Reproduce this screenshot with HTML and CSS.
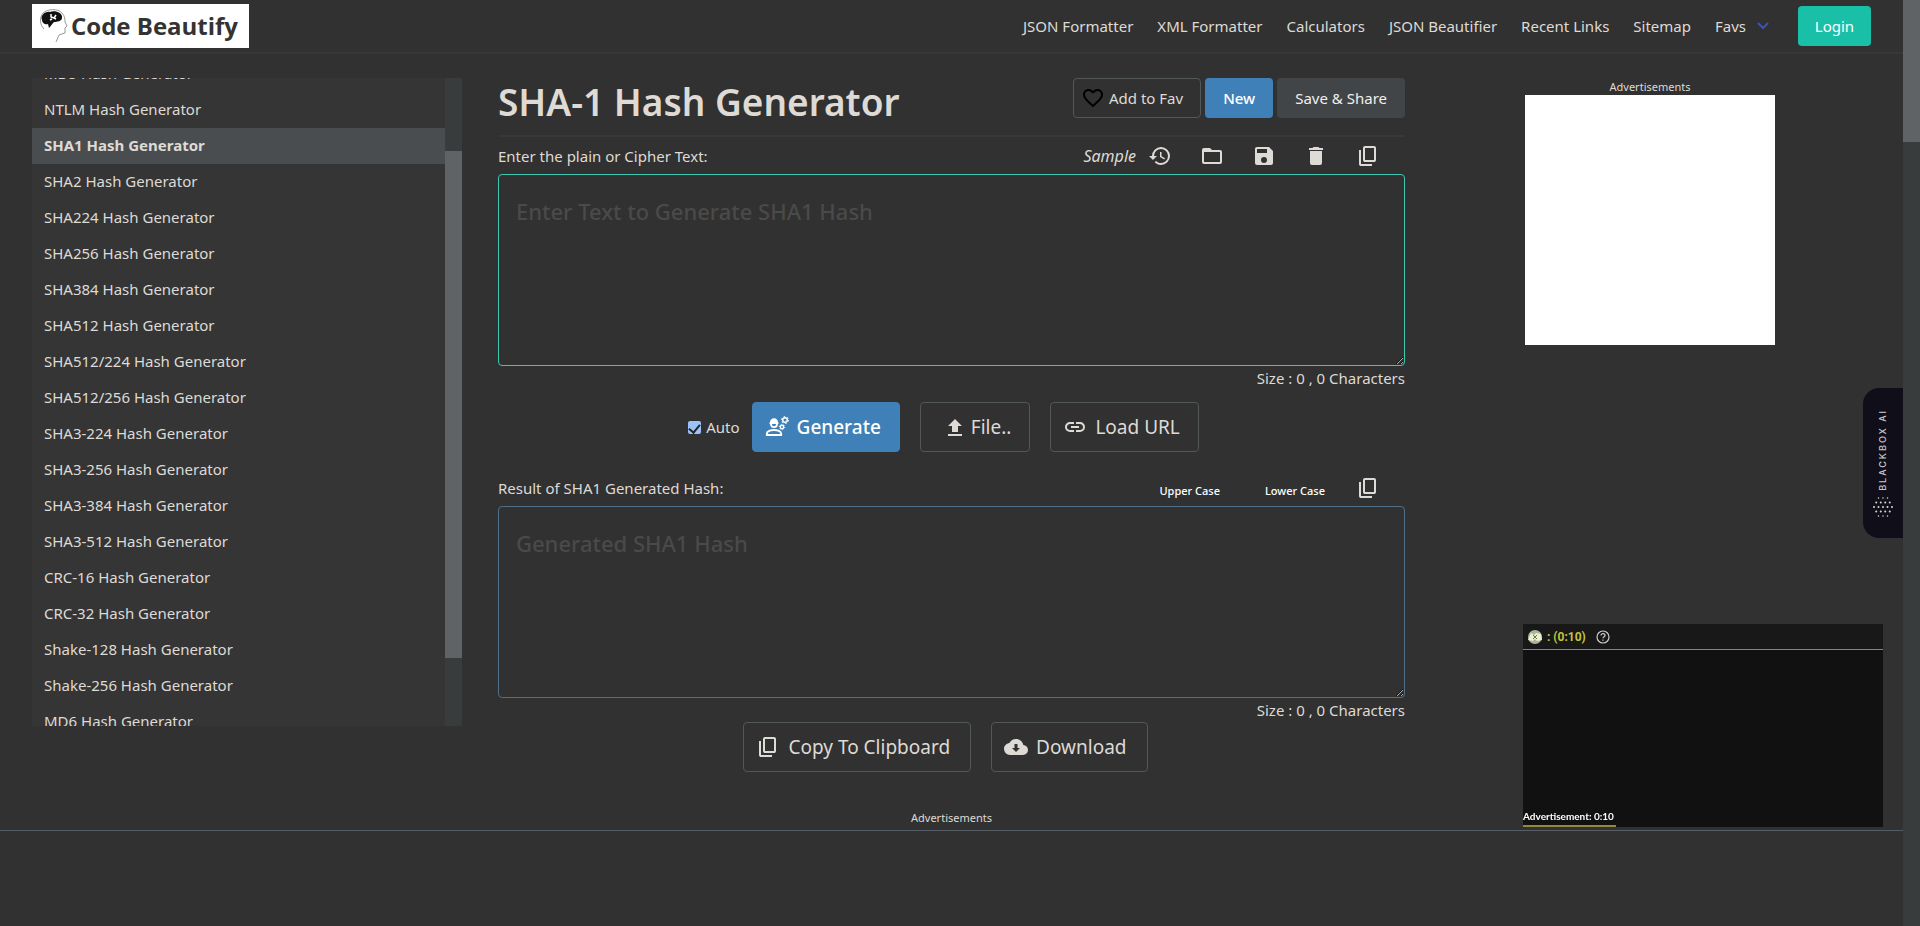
FILE: index.html
```
<!DOCTYPE html>
<html lang="en">
<head>
<meta charset="utf-8">
<title>SHA-1 Hash Generator</title>
<link rel="stylesheet" href="styles.css">
</head>
<body>
<svg class="sprite" aria-hidden="true">
  <symbol id="i-copy" viewBox="0 -960 960 960"><path d="M360-240q-33 0-56.500-23.500T280-320v-480q0-33 23.500-56.500T360-880h360q33 0 56.500 23.500T800-800v480q0 33-23.500 56.500T720-240H360Zm0-80h360v-480H360v480ZM200-80q-33 0-56.500-23.500T120-160v-560h80v560h440v80H200Z"/></symbol>
</svg>
<div class="shell">
  <div class="page">
    <header class="header">
      <a class="logo" href="#">
        <svg class="logo-mark" viewBox="0 0 30 36" aria-hidden="true">
          <path d="M5 21C1 17 0 10 4 5C8 1 19 0 23 5C26 8 26 12 26 14L28 18L26 20L26 25L20 27L17 34" fill="none" stroke="#999" stroke-width="1"/>
          <path d="M3 12C1 8 6 3 11 4C16 2 24 5 23 10C23 13 18 14 15 14C13 16 12 18 10 20L9 16C6 17 3 15 3 12Z" fill="#111"/>
          <path d="M12 6V9L15 10M11 12L13 11M17 7L15 10L17 11" fill="none" stroke="#fff" stroke-width="1.500"/>
        </svg>
        <span>Code Beautify</span>
      </a>
      <nav class="nav">
        <a href="#">JSON Formatter</a>
        <a href="#">XML Formatter</a>
        <a href="#">Calculators</a>
        <a href="#">JSON Beautifier</a>
        <a href="#">Recent Links</a>
        <a href="#">Sitemap</a>
        <a class="favs" href="#">Favs
          <svg viewBox="0 0 14 10" class="chevron" aria-hidden="true"><path d="M2 2L7 7L12 2" fill="none" stroke="#3f51b5" stroke-width="2"/></svg>
        </a>
        <button class="login" type="button">Login</button>
      </nav>
    </header>

    <div class="content">
      <aside class="sidebar">
        <div class="menu">
          <a href="#">MD5 Hash Generator</a>
          <a href="#">NTLM Hash Generator</a>
          <a class="active" href="#">SHA1 Hash Generator</a>
          <a href="#">SHA2 Hash Generator</a>
          <a href="#">SHA224 Hash Generator</a>
          <a href="#">SHA256 Hash Generator</a>
          <a href="#">SHA384 Hash Generator</a>
          <a href="#">SHA512 Hash Generator</a>
          <a href="#">SHA512/224 Hash Generator</a>
          <a href="#">SHA512/256 Hash Generator</a>
          <a href="#">SHA3-224 Hash Generator</a>
          <a href="#">SHA3-256 Hash Generator</a>
          <a href="#">SHA3-384 Hash Generator</a>
          <a href="#">SHA3-512 Hash Generator</a>
          <a href="#">CRC-16 Hash Generator</a>
          <a href="#">CRC-32 Hash Generator</a>
          <a href="#">Shake-128 Hash Generator</a>
          <a href="#">Shake-256 Hash Generator</a>
          <a href="#">MD6 Hash Generator</a>
        </div>
        <div class="track menu-track"><div class="thumb"></div></div>
      </aside>

      <main class="main">
        <div class="title-row">
          <h1>SHA-1 Hash Generator</h1>
          <div class="title-actions">
            <button class="btn-sm outline" type="button">
              <svg class="icon heart" viewBox="0 0 24 24" aria-hidden="true"><path d="M12.100,18.550L12,18.650L11.890,18.550C7.140,14.240 4,11.390 4,8.500C4,6.500 5.500,5 7.500,5C9.040,5 10.540,6 11.070,7.360H12.930C13.460,6 14.960,5 16.500,5C18.500,5 20,6.500 20,8.500C20,11.390 16.860,14.240 12.100,18.550M16.500,3C14.760,3 13.090,3.810 12,5.080C10.910,3.810 9.240,3 7.500,3C4.420,3 2,5.410 2,8.500C2,12.270 5.400,15.360 10.550,20.030L12,21.350L13.450,20.030C18.600,15.360 22,12.270 22,8.500C22,5.410 19.580,3 16.500,3Z"/></svg>
              Add to Fav</button>
            <button class="btn-sm primary" type="button">New</button>
            <button class="btn-sm solid" type="button">Save &amp; Share</button>
          </div>
        </div>
        <hr class="divider">

        <div class="bar">
          <label for="plain">Enter the plain or Cipher Text:</label>
          <div class="tools">
            <button class="tool sample" type="button"><i>Sample</i>
              <svg class="icon" viewBox="0 0 24 24" aria-hidden="true"><path d="M13.500,8H12V13L16.280,15.540L17,14.330L13.500,12.250V8M13,3A9,9 0 0,0 4,12H1L4.960,16.030L9,12H6A7,7 0 0,1 13,5A7,7 0 0,1 20,12A7,7 0 0,1 13,19C11.070,19 9.320,18.210 8.060,16.940L6.640,18.360C8.270,20 10.500,21 13,21A9,9 0 0,0 22,12A9,9 0 0,0 13,3"/></svg></button>
            <button class="tool" type="button" aria-label="Open"><svg class="icon" viewBox="0 0 24 24"><path d="M20,18H4V8H20M20,6H12L10,4H4C2.890,4 2,4.890 2,6V18A2,2 0 0,0 4,20H20A2,2 0 0,0 22,18V8C22,6.890 21.100,6 20,6Z"/></svg></button>
            <button class="tool" type="button" aria-label="Save"><svg class="icon" viewBox="0 0 24 24"><path d="M15,9H5V5H15M12,19A3,3 0 0,1 9,16A3,3 0 0,1 12,13A3,3 0 0,1 15,16A3,3 0 0,1 12,19M17,3H5C3.890,3 3,3.900 3,5V19A2,2 0 0,0 5,21H19A2,2 0 0,0 21,19V7L17,3Z"/></svg></button>
            <button class="tool" type="button" aria-label="Delete"><svg class="icon" viewBox="0 0 24 24"><path d="M19,4H15.500L14.500,3H9.500L8.500,4H5V6H19M6,19A2,2 0 0,0 8,21H16A2,2 0 0,0 18,19V7H6V19Z"/></svg></button>
            <button class="tool" type="button" aria-label="Copy"><svg class="icon"><use href="#i-copy"/></svg></button>
          </div>
        </div>
        <textarea class="box box-input" id="plain" placeholder="Enter Text to Generate SHA1 Hash"></textarea>
        <div class="size">Size : 0 , 0 Characters</div>

        <div class="actions">
          <label class="auto"><input type="checkbox" checked>Auto</label>
          <button class="btn primary" type="button">
            <svg class="icon" viewBox="0 0 24 24" aria-hidden="true"><path d="M1.900 20.100V18.500C1.900 16 6 15 9 15S16.100 16 16.100 18.500V20.100Z" fill="none" stroke="currentColor" stroke-width="2"/><path d="M4.500 7.500H5C5 5 6.700 3.300 9 3.300S13 5 13 7.500H13.500V9H4.500Z"/><path d="M6 9C6 13.200 12 13.200 12 9" fill="none" stroke="currentColor" stroke-width="1.800"/><circle cx="20" cy="5" r="2.300" fill="none" stroke="currentColor" stroke-width="1.500"/><circle cx="20" cy="5" r="3.500" fill="none" stroke="currentColor" stroke-width="1" stroke-dasharray="1.600 2.060"/><circle cx="17" cy="12" r="1.700" fill="none" stroke="currentColor" stroke-width="1.400"/><circle cx="17" cy="12" r="2.700" fill="none" stroke="currentColor" stroke-width="1" stroke-dasharray="1.200 1.620"/></svg>
            Generate</button>
          <button class="btn outline file" type="button">
            <svg class="icon-sm" viewBox="4 2 16 19" aria-hidden="true"><path d="M9,16V10H5L12,3L19,10H15V16H9M5,20V18H19V20H5Z"/></svg>
            File..</button>
          <button class="btn outline" type="button">
            <svg class="icon" viewBox="0 0 24 24" aria-hidden="true"><path d="M3.900,12C3.900,10.290 5.290,8.900 7,8.900H11V7H7A5,5 0 0,0 2,12A5,5 0 0,0 7,17H11V15.100H7C5.290,15.100 3.900,13.710 3.900,12M8,13H16V11H8V13M17,7H13V8.900H17C18.710,8.900 20.100,10.290 20.100,12C20.100,13.710 18.710,15.100 17,15.100H13V17H17A5,5 0 0,0 22,12A5,5 0 0,0 17,7Z"/></svg>
            Load URL</button>
        </div>

        <div class="bar">
          <label for="result">Result of SHA1 Generated Hash:</label>
          <div class="tools cases">
            <button class="case" type="button">Upper Case</button>
            <button class="case" type="button">Lower Case</button>
            <button class="tool" type="button" aria-label="Copy result"><svg class="icon"><use href="#i-copy"/></svg></button>
          </div>
        </div>
        <textarea class="box box-result" id="result" placeholder="Generated SHA1 Hash"></textarea>
        <div class="size">Size : 0 , 0 Characters</div>

        <div class="exports">
          <button class="btn outline" type="button"><svg class="icon"><use href="#i-copy"/></svg>Copy To Clipboard</button>
          <button class="btn outline" type="button"><svg class="icon" viewBox="0 0 24 24" aria-hidden="true"><path fill-rule="evenodd" d="M19.350,10.030C18.670,6.590 15.640,4 12,4C9.110,4 6.600,5.640 5.350,8.030C2.340,8.360 0,10.900 0,14A6,6 0 0,0 6,20H19A5,5 0 0,0 24,15C24,12.360 21.950,10.220 19.350,10.030ZM12 17L8 13H10.500V9H13.500V13H16Z"/></svg>Download</button>
        </div>
        <div class="ad-label">Advertisements</div>
      </main>

      <aside class="ads">
        <div class="ad-label">Advertisements</div>
        <div class="ad-box"></div>
      </aside>
    </div>

    <footer class="ad-bar"></footer>
  </div>
  <div class="track page-track"><div class="thumb"></div></div>
</div>

<section class="video">
  <div class="video-head">
    <svg class="coin" viewBox="0 0 16 16" aria-hidden="true"><circle cx="8" cy="8" r="7" fill="#aab49a"/><path d="M1 11L4 4L7 6L9 4L14 5L15 11L10 12L8 10L6 12Z" fill="#e8f0cc"/><path d="M6 6L10 10M10 6L6 10" stroke="#68705a" stroke-width="1"/></svg>
    <span>: (0:10)</span>
    <svg class="help" viewBox="0 0 14 14" aria-hidden="true"><circle cx="7" cy="7" r="6" fill="none" stroke="#ccc" stroke-width="1.200"/><path d="M5 5.500C5 3 9 3 9 5.500C9 6.800 7 6.800 7 8.300M7 9.500V10.800" fill="none" stroke="#ccc" stroke-width="1.200"/></svg>
  </div>
  <div class="video-body"><span>Advertisement: 0:10</span></div>
</section>

<button class="blackbox" type="button">
  <svg viewBox="0 0 20 20" class="dots" aria-hidden="true">
    <g fill="none" stroke="#d8d8de" stroke-linecap="round" stroke-dasharray="0 4.500">
      <path stroke-width="1.500" d="M5.500 1H15M5.500 19H15"/>
      <path stroke-width="2" d="M3.250 5.500H17M3.250 14.500H17"/>
      <path stroke-width="2" d="M1 10H19.500"/>
    </g>
  </svg>
  <span>BLACKBOX AI</span>
</button>
</body>
</html>
```
FILE: styles.css
```
* { box-sizing: border-box; }

body {
  margin: 0;
  background: #313131;
  color: #dedad5;
  font-family: "Noto Sans", "Open Sans", sans-serif;
  font-size: 15px;
  line-height: 24px;
}

a { color: inherit; text-decoration: none; }

button {
  font: inherit;
  color: inherit;
  background: none;
  border: 0;
  padding: 0;
  cursor: pointer;
}

.sprite { display: none; }
.icon { width: 24px; height: 24px; fill: currentColor; flex: none; }
.icon-sm { width: 16px; height: 19px; fill: currentColor; flex: none; }

.shell { display: flex; height: 100vh; overflow: hidden; }
.page { flex: 1; display: flex; flex-direction: column; min-width: 0; }

.track { width: 17px; flex: none; background: #393c3c; }
.thumb { background: #5f6366; }
.page-track .thumb { height: 142px; }

/* header */
.header {
  display: flex;
  align-items: center;
  justify-content: space-between;
  height: 54px;
  padding: 0 32px;
  border-bottom: 2px solid #373737;
}

.logo {
  display: flex;
  align-items: center;
  gap: 2px;
  height: 44px;
  padding: 0 11px 0 7px;
  background: #fff;
  color: #333;
  font-family: "Open Sans", sans-serif;
  font-size: 24px;
  font-weight: 700;
  white-space: nowrap;
}
.logo-mark { width: 30px; height: 36px; }

.nav { display: flex; align-items: center; gap: 24px; white-space: nowrap; }
.favs { display: flex; align-items: center; gap: 10px; margin-right: 4px; }
.chevron { width: 14px; height: 10px; }
.login {
  width: 73px;
  height: 40px;
  border-radius: 4px;
  background: #19bfa7;
  color: #fff;
}

/* columns */
.content {
  display: grid;
  grid-template-columns: 430fr 907fr 418fr;
  gap: 36px;
  align-items: start;
  padding: 24px 44px 0 32px;
}

.sidebar { display: flex; height: 648px; background: #353535; }
.menu {
  flex: 1;
  display: flex;
  flex-direction: column;
  overflow: hidden;
}
.menu a { flex: none; height: 36px; padding: 0 12px; line-height: 35px; }
.menu a:first-child { margin-top: -22px; }
.menu .active { background: #4a4d4f; font-weight: 700; }
.menu-track { padding-top: 73px; }
.menu-track .thumb { height: 507px; }

.title-row { display: flex; justify-content: space-between; align-items: flex-start; height: 50px; }
h1 { margin: 0; font-size: 37px; line-height: 48px; font-weight: 600; white-space: nowrap; }
.title-actions { display: flex; gap: 4px; }
.btn-sm {
  display: flex;
  align-items: center;
  gap: 4px;
  height: 40px;
  padding: 0 17px;
  border: 1px solid transparent;
  border-radius: 4px;
  white-space: nowrap;
}
.btn-sm.outline { padding-left: 7px; }
.outline { border-color: #52575a; }
.primary { background: #3f80b8; color: #fff; font-weight: 500; }
.solid { background: #414548; color: #f2f0ed; }
.heart { fill: #000; }

.divider { height: 2px; margin: 7px 0 3px; border: 0; background: #383838; }

.bar {
  display: flex;
  justify-content: space-between;
  align-items: center;
  height: 34px;
  padding-bottom: 2px;
}
.tools { display: flex; align-items: center; gap: 28px; padding-right: 25px; }
.tool { display: flex; align-items: center; }
.sample { gap: 12px; font-size: 16px; }
.cases { gap: 31px; }
.case { padding: 6px 0 0 14px; font-size: 11px; line-height: 18px; font-weight: 500; color: #fff; }

.box {
  display: block;
  width: 100%;
  height: 192px;
  padding: 18px 17px;
  border: 1px solid #3cc8b0;
  border-radius: 4px;
  background: transparent;
  color: #dedad5;
  font: 500 22px/36px "Noto Sans", "Open Sans", sans-serif;
  outline: 0;
  color-scheme: dark;
}
.box-result { border-color: #4e6f88; }
.box::placeholder { color: #4a4a4a; }
.size { text-align: right; }

.actions, .exports { display: flex; justify-content: center; gap: 20px; padding-right: 12px; }
.actions { padding: 12px 16px 20px 0; }
.auto { display: flex; align-items: center; gap: 5px; margin-right: -8px; }
.auto input {
  appearance: none;
  width: 13px;
  height: 13px;
  margin: 0;
  border-radius: 2px;
  background: #9cc3f8;
  display: grid;
  place-items: center;
}
.auto input:checked::before {
  content: "";
  width: 9px;
  height: 5px;
  border: solid #222;
  border-width: 0 0 2px 2px;
  transform: rotate(-50deg);
}
.btn {
  display: flex;
  align-items: center;
  gap: 8px;
  height: 50px;
  padding: 0 20px 0 12px;
  border: 1px solid #52575a;
  border-radius: 4px;
  font-size: 19px;
  white-space: nowrap;
}
.actions .btn { padding-right: 18px; }
.btn.primary { border-color: #3f80b8; }
.actions .file { padding-left: 26px; }

.ad-label { font-size: 11px; line-height: 20px; text-align: center; }
.main .ad-label { margin-top: 36px; }
.ads .ad-label { line-height: 17px; }
.ad-box { width: 250px; height: 250px; margin: 0 auto; background: #fff; }

.ad-bar {
  flex: none;
  height: 96px;
  margin-top: auto;
  border-top: 1px solid #565d64;
}

/* overlays */
.video {
  position: fixed;
  right: 37px;
  bottom: 99px;
  width: 360px;
  background: #111;
}
.video-head {
  display: flex;
  align-items: center;
  gap: 4px;
  height: 26px;
  padding: 0 4px;
  background: #181818;
  border-bottom: 1px solid #858585;
  color: #c3c43c;
  font: 700 12px/24px Roboto, sans-serif;
}
.coin { width: 16px; height: 16px; }
.help { width: 14px; height: 14px; margin-left: 6px; }
.video-body { display: flex; align-items: flex-end; height: 177px; }
.video-body span {
  width: 93px;
  border-bottom: 2px solid #96883a;
  color: #fff;
  font: 700 10px/18px Lato, sans-serif;
  white-space: nowrap;
}

.blackbox {
  position: fixed;
  right: 17px;
  top: 388px;
  width: 40px;
  height: 150px;
  display: flex;
  flex-direction: column-reverse;
  align-items: center;
  justify-content: center;
  gap: 6px;
  border-radius: 16px 0 0 16px;
  background: #100f19;
  color: #c8c8d0;
}
.blackbox span {
  writing-mode: vertical-rl;
  transform: rotate(180deg);
  font: 500 9px/12px Inter, sans-serif;
  letter-spacing: 2px;
}
.dots { width: 20px; height: 20px; }
```
